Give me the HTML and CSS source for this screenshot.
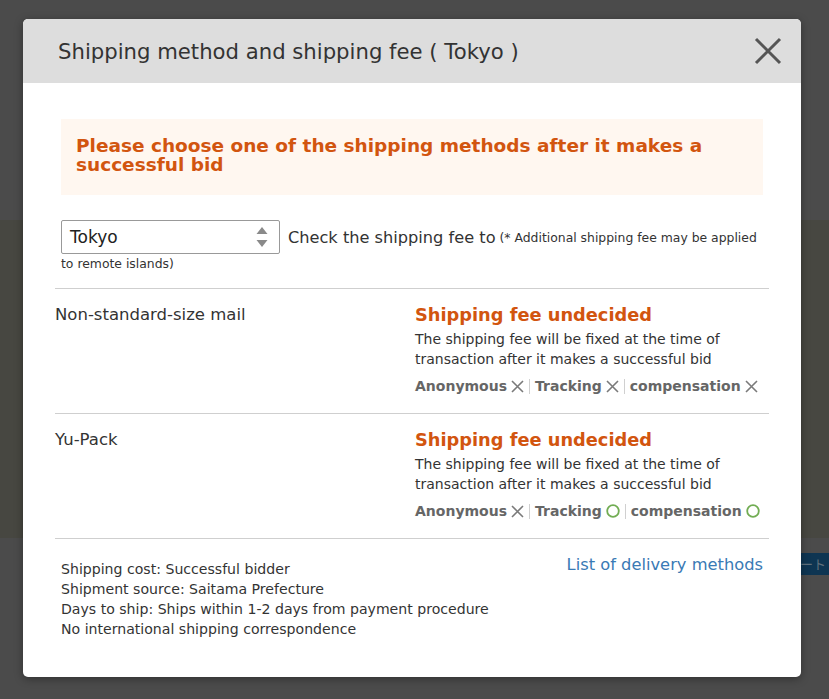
FILE: index.html
```html
<!DOCTYPE html>
<html lang="en">
<head>
<meta charset="utf-8">
<title>Shipping method and shipping fee</title>
<link rel="stylesheet" href="styles.css">
</head>
<body>
<div class="page">
  <div class="page-top"></div>
  <div class="page-band"></div>
  <div class="page-bottom"><span class="under-btn">ート</span></div>
</div>

<div class="modal">
  <div class="modal-head">
    <h2 class="modal-title">Shipping method and shipping fee ( Tokyo )</h2>
    <button class="close" aria-label="close">
      <svg width="28" height="28" viewBox="0 0 28 28"><path d="M2 2L26 26M26 2L2 26" stroke="#555" stroke-width="3" fill="none"/></svg>
    </button>
  </div>
  <div class="modal-body">
    <div class="alert">Please choose one of the shipping methods after it makes a successful bid</div>

    <div class="area">
      <span class="select"><span class="sel-val">Tokyo</span>
        <svg class="spin" width="12" height="22" viewBox="0 0 12 22"><path d="M6 1L11.5 8H0.5Z" fill="#8a8a8a"/><path d="M6 21L11.5 14H0.5Z" fill="#8a8a8a"/></svg>
      </span>
      <span class="check">Check the shipping fee to</span>
      <span class="note">(* Additional shipping fee may be applied to remote islands)</span>
    </div>

    <div class="methods">
      <div class="method">
        <div class="m-name">Non-standard-size mail</div>
        <div class="m-info">
          <div class="m-fee">Shipping fee undecided</div>
          <div class="m-desc">The shipping fee will be fixed at the time of transaction after it makes a successful bid</div>
          <div class="tags">
            <span class="tag">Anonymous <svg class="ic" width="13" height="13" viewBox="0 0 13 13"><path d="M1 1L12 12M12 1L1 12" stroke="#7a7a7a" stroke-width="1.6"/></svg></span>
            <span class="sep"></span>
            <span class="tag">Tracking <svg class="ic" width="13" height="13" viewBox="0 0 13 13"><path d="M1 1L12 12M12 1L1 12" stroke="#7a7a7a" stroke-width="1.6"/></svg></span>
            <span class="sep"></span>
            <span class="tag">compensation <svg class="ic" width="13" height="13" viewBox="0 0 13 13"><path d="M1 1L12 12M12 1L1 12" stroke="#7a7a7a" stroke-width="1.6"/></svg></span>
          </div>
        </div>
      </div>
      <div class="method">
        <div class="m-name">Yu-Pack</div>
        <div class="m-info">
          <div class="m-fee">Shipping fee undecided</div>
          <div class="m-desc">The shipping fee will be fixed at the time of transaction after it makes a successful bid</div>
          <div class="tags">
            <span class="tag">Anonymous <svg class="ic" width="13" height="13" viewBox="0 0 13 13"><path d="M1 1L12 12M12 1L1 12" stroke="#7a7a7a" stroke-width="1.6"/></svg></span>
            <span class="sep"></span>
            <span class="tag">Tracking <svg class="ic" width="14" height="14" viewBox="0 0 14 14"><circle cx="7" cy="7" r="5.8" stroke="#72ad54" stroke-width="1.8" fill="none"/></svg></span>
            <span class="sep"></span>
            <span class="tag">compensation <svg class="ic" width="14" height="14" viewBox="0 0 14 14"><circle cx="7" cy="7" r="5.8" stroke="#72ad54" stroke-width="1.8" fill="none"/></svg></span>
          </div>
        </div>
      </div>
      <div class="foot">
        <div class="foot-info">
          <div>Shipping cost: Successful bidder</div>
          <div>Shipment source: Saitama Prefecture</div>
          <div>Days to ship: Ships within 1-2 days from payment procedure</div>
          <div>No international shipping correspondence</div>
        </div>
        <a class="foot-link" href="#">List of delivery methods</a>
      </div>
    </div>
  </div>
</div>
</body>
</html>
```

FILE: styles.css
```css
html, body {
  margin: 0;
  padding: 0;
  height: 100%;
  overflow: hidden;
}
body {
  background: #4b4b4b;
  font-family: "DejaVu Sans", Verdana, sans-serif;
  color: #333;
}
.page-top { height: 220px; background: #4b4b4b; }
.page-band { height: 318px; background: #474741; }
.page-bottom {
  display: flex;
  justify-content: flex-end;
  padding-top: 15px;
}
.under-btn {
  display: block;
  width: 29px;
  height: 22px;
  background: #0e3552;
  color: #5f6f7c;
  font-size: 13px;
  line-height: 22px;
  overflow: hidden;
  white-space: nowrap;
  font-family: "Noto Sans CJK JP", sans-serif;
}

.modal {
  position: absolute;
  top: 19px;
  left: 23px;
  width: 778px;
  height: 658px;
  background: #fff;
  border-radius: 5px;
  overflow: hidden;
  box-shadow: 0 2px 8px rgba(0,0,0,0.35);
}
.modal-head {
  height: 64px;
  background: #dddddd;
  display: flex;
  align-items: center;
  justify-content: space-between;
  padding: 0 18px 0 35px;
}
.modal-title {
  margin: 0;
  font-size: 21.2px;
  font-weight: normal;
  color: #333;
}
.close {
  border: 0;
  background: none;
  padding: 0;
  width: 30px;
  height: 30px;
  display: flex;
  align-items: center;
  justify-content: center;
  cursor: pointer;
}

.modal-body {
  padding: 36px 38px 0;
}
.alert {
  background: #fff7f0;
  color: #d2550f;
  font-weight: bold;
  font-size: 18.5px;
  line-height: 19px;
  padding: 17px 15px 21px;
}

.area {
  margin-top: 25px;
  font-size: 12.4px;
  line-height: 17px;
  color: #333;
}
.select {
  display: inline-flex;
  align-items: center;
  justify-content: space-between;
  box-sizing: border-box;
  width: 219px;
  height: 34px;
  border: 1px solid #999;
  border-radius: 2px;
  padding: 0 11px 0 8px;
  font-size: 17px;
  color: #222;
  vertical-align: middle;
}
.check {
  font-size: 16.2px;
  vertical-align: middle;
  margin-left: 4px;
}
.note {
  font-size: 12.4px;
  vertical-align: middle;
}

.methods {
  margin: 16px -6px 0;
}
.method {
  display: grid;
  grid-template-columns: 360px 1fr;
  border-top: 1px solid #cfcfcf;
  padding: 15px 0 17px;
}
.m-name {
  font-size: 16.5px;
  line-height: 22px;
  color: #333;
}
.m-fee {
  font-size: 17.8px;
  line-height: 22px;
  font-weight: bold;
  color: #d2550f;
}
.m-desc {
  font-size: 14px;
  line-height: 20px;
  color: #333;
  margin-top: 3px;
}
.tags {
  display: flex;
  align-items: center;
  margin-top: 7px;
  font-size: 14px;
  line-height: 20px;
  font-weight: bold;
  color: #666;
}
.tag {
  display: inline-flex;
  align-items: center;
  gap: 4px;
}
.sep {
  width: 1px;
  height: 15px;
  background: #d0d0d0;
  margin: 0 5px;
}

.foot {
  border-top: 1px solid #cfcfcf;
  display: flex;
  justify-content: space-between;
  align-items: flex-start;
  padding: 15px 6px 0;
}
.foot-info {
  font-size: 14.1px;
  line-height: 20px;
  padding-top: 5px;
  color: #333;
}
.foot-link {
  font-size: 16.3px;
  line-height: 22px;
  color: #3a7ab5;
  text-decoration: none;
}
```
